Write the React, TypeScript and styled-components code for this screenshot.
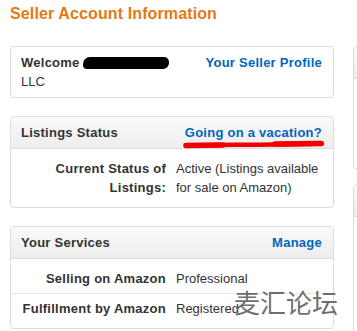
import styled, { createGlobalStyle } from "styled-components";

const GlobalStyle = createGlobalStyle`
  html, body {
    margin: 0;
    padding: 0;
    background: #fff;
    overflow: hidden;
  }
  body {
    font-family: "Liberation Sans", Arial, sans-serif;
    font-size: 13px;
    color: #333;
  }
`;

const Page = styled.div`
  position: relative;
  width: 357px;
  height: 331px;
  padding: 4px 10px 0 10px;
  box-sizing: border-box;
  overflow: hidden;
`;

const Title = styled.h1`
  margin: 0 0 22px 0;
  font-size: 16px;
  line-height: 20px;
  font-weight: bold;
  letter-spacing: 0.12px;
  color: #e47911;
  white-space: nowrap;
`;

const Columns = styled.div`
  display: flex;
  gap: 19px;
  width: 600px;
`;

const MainColumn = styled.div`
  width: 324px;
  flex-shrink: 0;
  display: flex;
  flex-direction: column;
  gap: 18px;
`;

const SideColumn = styled.div`
  width: 220px;
  flex-shrink: 0;
  display: flex;
  flex-direction: column;
  gap: 14px;
`;

const Card = styled.section`
  border: 1px solid #ddd;
  border-radius: 4px;
  background: #fff;
  overflow: hidden;
`;

const SideCard = styled(Card)<{ $height: number }>`
  height: ${(p) => p.$height}px;
  box-sizing: border-box;
`;

const CardHeader = styled.div`
  display: flex;
  justify-content: space-between;
  align-items: center;
  padding: 6px 11px 6px 10px;
  line-height: 19px;
  background: linear-gradient(to bottom, #fafafa, #ededed);
  border-bottom: 1px solid #ddd;
  font-weight: bold;
  letter-spacing: 0.25px;
`;

const HeaderTitle = styled.span`
  color: #333;
`;

const Link = styled.a`
  position: relative;
  color: #0066c0;
  font-weight: bold;
  letter-spacing: 0.25px;
  text-decoration: none;
  white-space: nowrap;
`;

const Scribble = styled.svg`
  position: absolute;
  left: -2px;
  top: 16px;
  width: 142px;
  height: 10px;
  overflow: visible;
`;

const WelcomeRow = styled.div`
  display: flex;
  justify-content: space-between;
  align-items: flex-start;
  padding: 6px 11px 6px 10px;
  line-height: 19px;
`;

const WelcomeText = styled.div`
  width: 160px;
`;

const Strong = styled.span`
  font-weight: bold;
  letter-spacing: 0.25px;
`;

const Redacted = styled.span`
  display: inline-block;
  width: 86px;
  height: 12px;
  margin-left: 3px;
  vertical-align: -2px;
  background: #000;
  border-radius: 7px 5px 6px 4px;
`;

const CardBody = styled.div`
  padding: 5px 0;
`;

const Row = styled.div`
  display: grid;
  grid-template-columns: 145px 1fr;
  column-gap: 10px;
  padding: 5px 10px;
  line-height: 19px;
  & + & {
    border-top: 1px solid #e7e7e7;
  }
`;

const Label = styled.div`
  text-align: right;
  font-weight: bold;
  letter-spacing: 0.25px;
  color: #333;
`;

const Value = styled.div`
  color: #333;
`;

const Watermark = styled.div`
  position: absolute;
  left: 234px;
  top: 289px;
  font-family: "Noto Sans CJK SC", "Noto Sans", sans-serif;
  font-size: 26px;
  line-height: 1;
  color: rgba(85, 85, 85, 0.85);
  pointer-events: none;
`;

const rows = [
  { label: "Selling on Amazon", value: "Professional" },
  { label: "Fulfillment by Amazon", value: "Registered" },
];

export default function App() {
  return (
    <>
      <GlobalStyle />
      <Page>
        <Title>Seller Account Information</Title>
        <Columns>
          <MainColumn>
            <Card>
              <WelcomeRow>
                <WelcomeText>
                  <Strong>Welcome</Strong>
                  <Redacted />
                  <br />
                  LLC
                </WelcomeText>
                <Link href="#">Your Seller Profile</Link>
              </WelcomeRow>
            </Card>

            <Card>
              <CardHeader>
                <HeaderTitle>Listings Status</HeaderTitle>
                <Link href="#">
                  Going on a vacation?
                  <Scribble viewBox="0 0 142 10">
                    <path
                      d="M3 6.5 C 30 5.5, 60 6, 90 5.5 S 130 5, 139 4.5"
                      stroke="#f00000"
                      strokeWidth="4.5"
                      strokeLinecap="round"
                      fill="none"
                    />
                    <path
                      d="M3 6.5 L 40 6"
                      stroke="#f00000"
                      strokeWidth="5.5"
                      strokeLinecap="round"
                      fill="none"
                    />
                    <path
                      d="M92 5 L 138 4.5"
                      stroke="#f00000"
                      strokeWidth="5.5"
                      strokeLinecap="round"
                      fill="none"
                    />
                  </Scribble>
                </Link>
              </CardHeader>
              <CardBody>
                <Row>
                  <Label>Current Status of Listings:</Label>
                  <Value>Active (Listings available for sale on Amazon)</Value>
                </Row>
              </CardBody>
            </Card>

            <Card>
              <CardHeader>
                <HeaderTitle>Your Services</HeaderTitle>
                <Link href="#">Manage</Link>
              </CardHeader>
              <CardBody>
                {rows.map((r) => (
                  <Row key={r.label}>
                    <Label>{r.label}</Label>
                    <Value>{r.value}</Value>
                  </Row>
                ))}
              </CardBody>
            </Card>
          </MainColumn>

          <SideColumn>
            <SideCard $height={124}>
              <CardHeader>&nbsp;</CardHeader>
            </SideCard>
            <SideCard $height={200}>
              <CardHeader>&nbsp;</CardHeader>
            </SideCard>
          </SideColumn>
        </Columns>
        <Watermark>麦汇论坛</Watermark>
      </Page>
    </>
  );
}
